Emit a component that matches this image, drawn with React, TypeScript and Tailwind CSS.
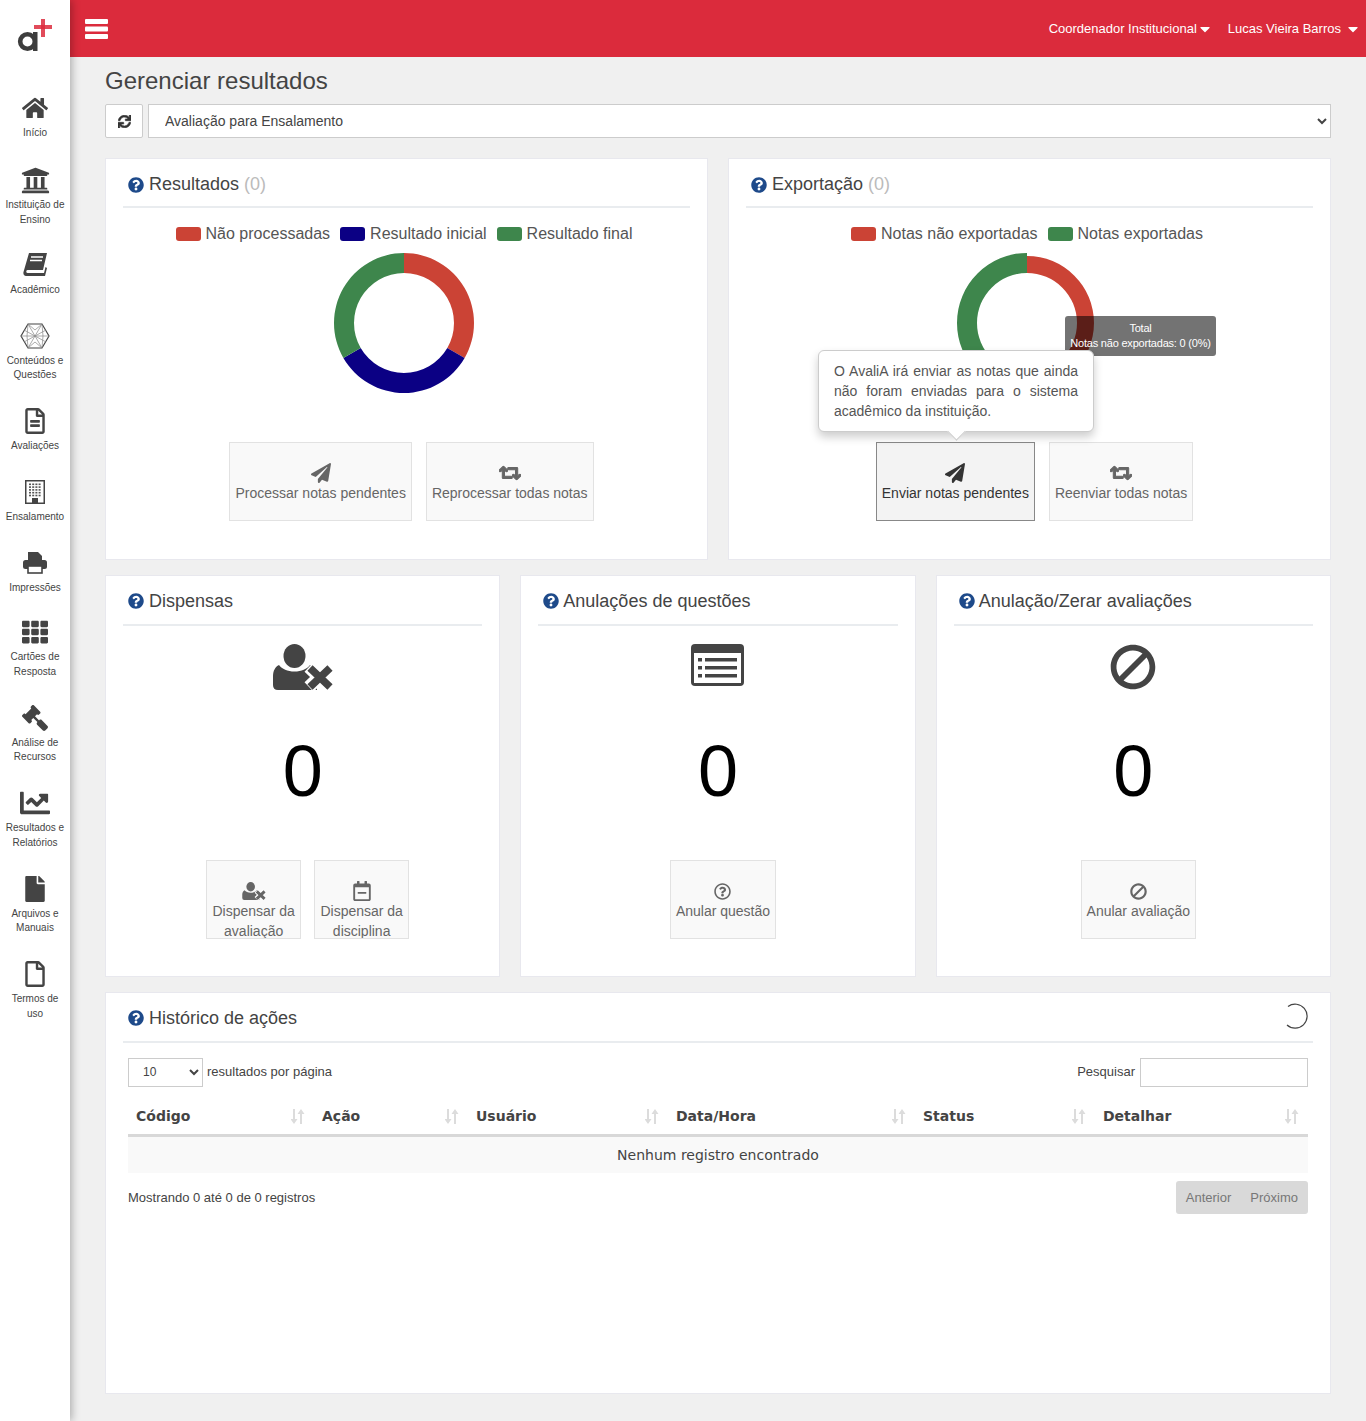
import type { ReactNode } from "react";
import {
  FaBan,
  FaCaretDown,
  FaChartLine,
  FaFile,
  FaGavel,
  FaHome,
  FaPaperPlane,
  FaQuestionCircle,
  FaRegCalendarMinus,
  FaRegFile,
  FaRegFileAlt,
  FaRegQuestionCircle,
  FaRetweet,
  FaSync,
  FaTh,
  FaUniversity,
} from "react-icons/fa";

function BookIcon() {
  return (
    <svg width="25" height="23" viewBox="0 0 25 23">
      <path d="M6 0h18l-4 17H4.500c-1.500 0-1.800 3 0 3H21l1.500-6 1.500 1-2 8H3c-2 0-3-2-2.500-4z" fill="#444" />
      <path d="M8 4h12M7 7.500h12" stroke="#fff" strokeWidth="1.300" />
    </svg>
  );
}

function MeshIcon() {
  return (
    <svg width="30" height="26" viewBox="0 0 30 26" fill="none" stroke="#888" strokeWidth="0.700">
      <path d="M8 1h14l7 12-7 12H8L1 13z" stroke="#444" strokeWidth="1.200" />
      <path d="M8 1l14 24M22 1L8 25M1 13h28M8 1l-1 12 1 12M22 1l1 12-1 12M4 7l22 12M26 7L4 19M8 1l7 6 7-6M8 25l7-6 7 6" />
    </svg>
  );
}

function BuildingIcon() {
  const dots = [0, 1, 2, 3, 4].flatMap((row) => [0, 1, 2, 3].map((col) => [col, row]));
  return (
    <svg width="20" height="24" viewBox="0 0 20 24">
      <rect x="0.750" y="0.750" width="18.500" height="22.500" fill="none" stroke="#444" strokeWidth="1.500" />
      {dots.map(([col, row]) => (
        <rect key={`${col}-${row}`} x={4 + col * 3.200} y={3.500 + row * 2.800} width="2" height="1.600" fill="#555" />
      ))}
      <rect x="7" y="18" width="6" height="5" fill="#444" />
    </svg>
  );
}

function PrinterIcon() {
  return (
    <svg width="24" height="22" viewBox="0 0 24 22" fill="#444">
      <path d="M5 0h10l4 4v5H5z" />
      <rect x="0" y="8" width="24" height="9" rx="2.500" />
      <rect x="5" y="14" width="14" height="7" fill="#fff" stroke="#444" strokeWidth="1.600" />
    </svg>
  );
}

function ListAltIcon() {
  return (
    <svg width="53" height="42" viewBox="0 0 53 42">
      <rect width="53" height="42" rx="4" fill="#444" />
      <rect x="3" y="9" width="47" height="30" fill="#fff" />
      <path d="M7 14h4v3.500H7zM7 22h4v3.500H7zM7 30h4v3.500H7zM14 14h32v3.500H14zM14 22h32v3.500H14zM14 30h32v3.500H14z" fill="#444" />
    </svg>
  );
}

function UserTimesIcon({ width, height }: { width: number; height: number }) {
  return (
    <svg width={width} height={height} viewBox="0 0 60 46" fill="currentColor">
      <ellipse cx="21.500" cy="12" rx="11" ry="12" />
      <path d="M6 21c3 4 8.500 6.500 15.500 6.500S34 25 37 21c4 2 7 6 7 12v13H5q-5 0-5-5v-9c0-5 2-9 6-11z" />
      <path d="M36 23l21 20M57 23L36 43" stroke="#fff" strokeWidth="13" />
      <path d="M37 24l20 19M57 24L37 43" stroke="currentColor" strokeWidth="7.500" />
    </svg>
  );
}

function SortIcon() {
  return (
    <svg width="14" height="15" viewBox="0 0 14 15" fill="#dcdcdc" className="mr-[1px] shrink-0">
      <path d="M2 0h2v10h2.500L3 15l-3.500-5H2zM10 0l3.500 5H11v10H9V5H6.500z" />
    </svg>
  );
}

const navItems: { icon: ReactNode; label: string[]; tweak?: string }[] = [
  { icon: <FaHome size={26} />, label: ["Início"] },
  { icon: <FaUniversity size={29} />, label: ["Instituição de", "Ensino"], tweak: "mt-[1px]" },
  { icon: <BookIcon />, label: ["Acadêmico"], tweak: "-mt-[1px]" },
  { icon: <MeshIcon />, label: ["Conteúdos e", "Questões"] },
  { icon: <FaRegFileAlt size={26} />, label: ["Avaliações"] },
  { icon: <BuildingIcon />, label: ["Ensalamento"] },
  { icon: <PrinterIcon />, label: ["Impressões"] },
  { icon: <FaTh size={26} />, label: ["Cartões de", "Resposta"], tweak: "-mt-[2px]" },
  { icon: <FaGavel size={26} className="-scale-x-100" />, label: ["Análise de", "Recursos"] },
  { icon: <FaChartLine size={30} />, label: ["Resultados e", "Relatórios"] },
  { icon: <FaFile size={26} />, label: ["Arquivos e", "Manuais"] },
  { icon: <FaRegFile size={26} />, label: ["Termos de", "uso"] },
];

function Sidebar() {
  return (
    <aside className="relative z-20 flex w-[70px] shrink-0 flex-col items-center bg-white shadow-[2px_0_8px_rgba(0,0,0,0.28)]">
      <div className="h-[93px] w-full">
        <svg width="70" height="60" viewBox="0 0 70 60">
          <circle cx="27.500" cy="41.500" r="7.300" fill="none" stroke="#3d3d3d" strokeWidth="4.600" />
          <rect x="33" y="32" width="4.500" height="19" fill="#3d3d3d" />
          <rect x="34" y="25" width="18" height="4" fill="#dc2c3d" opacity="0.85" />
          <rect x="41" y="19" width="4" height="18" fill="#dc2c3d" opacity="0.85" />
        </svg>
      </div>
      <nav className="flex w-full flex-col gap-[23.5px]">
        {navItems.map((item) => (
          <a key={item.label[0]} className={`flex flex-col items-center text-[#444] ${item.tweak ?? ""}`}>
            <span className="flex h-[30px] items-center justify-center">{item.icon}</span>
            <span className="mt-[3px] text-center text-[10px] leading-[14.5px] whitespace-nowrap">
              {item.label.map((line) => (
                <span key={line} className="block">
                  {line}
                </span>
              ))}
            </span>
          </a>
        ))}
      </nav>
    </aside>
  );
}

function Topbar() {
  return (
    <header className="flex h-[57px] items-center justify-between bg-[#db2b3c] pr-[5.5px] pl-[15px] text-[13px] text-white">
      <svg width="23" height="20" viewBox="0 0 23 20" fill="#fff">
        <rect y="0" width="23" height="5" rx="1" />
        <rect y="7.500" width="23" height="5" rx="1" />
        <rect y="15" width="23" height="5" rx="1" />
      </svg>
      <div className="flex items-center">
        <span>Coordenador Institucional</span>
        <FaCaretDown size={16} className="ml-[0.5px]" />
        <span className="ml-[14.5px]">Lucas Vieira Barros</span>
        <FaCaretDown size={16} className="ml-[3.5px]" />
      </div>
    </header>
  );
}

function CardTitle({
  children,
  right,
  tall,
  tight,
}: {
  children: ReactNode;
  right?: ReactNode;
  tall?: boolean;
  tight?: boolean;
}) {
  return (
    <div
      className={`flex items-center justify-between border-b-2 border-[#e9ecef] pl-[5px] text-[18px] text-[#444] ${
        tall ? "h-[50px]" : "h-[49px]"
      }`}
    >
      <div className={`flex items-center ${tall ? "mt-[2px]" : "mt-[4px]"} ${tight ? "gap-[4px]" : "gap-[5px]"}`}>
        <FaQuestionCircle size={16} className="text-[#1e4a8a]" />
        <span>{children}</span>
      </div>
      {right}
    </div>
  );
}

function Card({ children }: { children: ReactNode }) {
  return <section className="relative h-[402px] border border-[#e8e8ee] bg-white px-[17px]">{children}</section>;
}

function ActionButton({
  icon,
  children,
  active,
  narrow,
}: {
  icon: ReactNode;
  children: ReactNode;
  active?: boolean;
  narrow?: boolean;
}) {
  return (
    <button
      className={`block h-[79px] border text-[14px] leading-[20px] ${narrow ? "w-[95px]" : "whitespace-nowrap"} ${
        active ? "border-[#888] bg-[#f3f3f3] text-[#333]" : "border-[#e2e2e2] bg-[#f9f9f9] text-[#666]"
      }`}
    >
      <div className="flex h-[77px] flex-col items-center overflow-hidden px-[5px] pt-[20px]">
        <span className="flex h-[20px] shrink-0 items-center">{icon}</span>
        <span>{children}</span>
      </div>
    </button>
  );
}

function Legend({ items }: { items: { color: string; label: string }[] }) {
  return (
    <div className="mr-[5px] flex h-[20px] items-center justify-center gap-[10px] text-[16px] text-[#555]">
      {items.map((item) => (
        <div key={item.label} className="flex items-center gap-[5px]">
          <span className="h-[14px] w-[25px] rounded-[3px]" style={{ backgroundColor: item.color }} />
          <span>{item.label}</span>
        </div>
      ))}
    </div>
  );
}

function polar(r: number, deg: number) {
  const a = ((deg - 90) * Math.PI) / 180;
  return `${(75 + r * Math.cos(a)).toFixed(2)} ${(75 + r * Math.sin(a)).toFixed(2)}`;
}

function arc(from: number, to: number, outer: number, inner: number) {
  return `M${polar(outer, from)} A${outer} ${outer} 0 0 1 ${polar(outer, to)} L${polar(inner, to)} A${inner} ${inner} 0 0 0 ${polar(inner, from)} Z`;
}

function Donut({ slices }: { slices: { from: number; to: number; outer: number; color: string }[] }) {
  return (
    <svg width="150" height="150" viewBox="0 0 150 150" className="mx-auto">
      {slices.map((s) => (
        <path key={s.color} d={arc(s.from, s.to, s.outer, 50)} fill={s.color} />
      ))}
    </svg>
  );
}

const RED = "#cb4335";
const BLUE = "#0b0084";
const GREEN = "#3e864c";

function ResultadosCard() {
  return (
    <Card>
      <CardTitle>
        Resultados <span className="text-[#bbb]">(0)</span>
      </CardTitle>
      <div className="mt-[16px]">
        <Legend
          items={[
            { color: RED, label: "Não processadas" },
            { color: BLUE, label: "Resultado inicial" },
            { color: GREEN, label: "Resultado final" },
          ]}
        />
      </div>
      <div className="mt-[4px] mr-[5px]">
        <Donut
          slices={[
            { from: 0, to: 120, outer: 70, color: RED },
            { from: 120, to: 240, outer: 70, color: BLUE },
            { from: 240, to: 360, outer: 70, color: GREEN },
          ]}
        />
      </div>
      <div className="mt-[44px] flex justify-center gap-[14px] pl-[10px]">
        <ActionButton icon={<FaPaperPlane size={20} />}>Processar notas pendentes</ActionButton>
        <ActionButton icon={<FaRetweet size={22} className="stroke-current stroke-[30px]" />}>
          Reprocessar todas notas
        </ActionButton>
      </div>
    </Card>
  );
}

function ExportacaoCard() {
  return (
    <Card>
      <CardTitle>
        Exportação <span className="text-[#bbb]">(0)</span>
      </CardTitle>
      <div className="mt-[16px]">
        <Legend
          items={[
            { color: RED, label: "Notas não exportadas" },
            { color: GREEN, label: "Notas exportadas" },
          ]}
        />
      </div>
      <div className="mt-[4px] mr-[5px]">
        <Donut
          slices={[
            { from: 0, to: 180, outer: 67, color: RED },
            { from: 180, to: 360, outer: 70, color: GREEN },
          ]}
        />
      </div>
      <div className="mt-[44px] flex justify-center gap-[14px] pl-[10px]">
        <ActionButton active icon={<FaPaperPlane size={20} />}>
          Enviar notas pendentes
        </ActionButton>
        <ActionButton icon={<FaRetweet size={22} className="stroke-current stroke-[30px]" />}>
          Reenviar todas notas
        </ActionButton>
      </div>

      <div className="absolute top-[157px] left-[336px] w-[151px] rounded-[3px] bg-black/55 py-[5px] text-center text-[11px] leading-[15px] tracking-[-0.2px] text-white">
        <div>Total</div>
        <div>Notas não exportadas: 0 (0%)</div>
      </div>

      <div className="absolute top-[191px] left-[89px] w-[276px] rounded-[6px] border border-[#ccc] bg-white px-[15px] py-[10px] text-justify text-[14px] leading-[20px] text-[#555] shadow-[0_5px_10px_rgba(0,0,0,0.2)]">
        O AvaliA irá enviar as notas que ainda não foram enviadas para o sistema acadêmico da instituição.
        <span className="absolute -bottom-[7px] left-[131px] h-[13px] w-[13px] rotate-45 border-r border-b border-[#ccc] bg-white" />
      </div>
    </Card>
  );
}

function StatCard({
  title,
  icon,
  tight,
  children,
}: {
  title: string;
  icon: ReactNode;
  tight?: boolean;
  children: ReactNode;
}) {
  return (
    <Card>
      <CardTitle tall tight={tight}>
        {title}
      </CardTitle>
      <div className="mt-[18px] flex h-[46px] items-start justify-center text-[#444]">{icon}</div>
      <div className="mt-[40px] text-center text-[72px] leading-[83px] text-black">0</div>
      <div className="mt-[47px] flex justify-center gap-[13px] pl-[10px]">{children}</div>
    </Card>
  );
}

const columns = [
  { label: "Código", width: "w-[186px]" },
  { label: "Ação", width: "w-[154px]" },
  { label: "Usuário", width: "w-[200px]" },
  { label: "Data/Hora", width: "w-[247px]" },
  { label: "Status", width: "w-[180px]" },
  { label: "Detalhar", width: "w-[213px]" },
];

function HistoricoCard() {
  return (
    <Card>
      <CardTitle
        tall
        right={
          <svg width="26" height="26" viewBox="0 0 26 26" fill="none" className="mr-[5px] mb-[2px]">
            <path d="M6 3.500A12 12 0 1 1 5 22" stroke="#444" strokeWidth="1.200" />
          </svg>
        }
      >
        Histórico de ações
      </CardTitle>
      <div className="px-[5px]">
        <div className="mt-[14px] flex h-[30px] items-center justify-between text-[13px] text-[#444]">
          <div className="flex items-center gap-[4px]">
            <select className="h-[29px] w-[75px] border border-[#ccc] bg-white pl-[10px] text-[12px] text-[#444]">
              <option>10</option>
            </select>
            <span>resultados por página</span>
          </div>
          <div className="flex items-center gap-[5px]">
            <span>Pesquisar</span>
            <input className="h-[29px] w-[168px] border border-[#ccc] bg-white" />
          </div>
        </div>

        <table className="mt-[13px] w-full table-fixed font-['DejaVu_Sans',sans-serif] text-[14px] text-[#444]">
          <thead>
            <tr className="h-[35px] border-b-[3px] border-[#d8d8d8]">
              {columns.map((col) => (
                <th key={col.label} className={`${col.width} px-[8px] text-left font-bold`}>
                  <div className="flex items-center justify-between">
                    <span>{col.label}</span>
                    <SortIcon />
                  </div>
                </th>
              ))}
            </tr>
          </thead>
          <tbody>
            <tr className="h-[38px] bg-[#f9f9f9]">
              <td colSpan={6} className="pt-[1px] text-center">
                Nenhum registro encontrado
              </td>
            </tr>
          </tbody>
        </table>

        <div className="mt-[8px] flex items-center justify-between text-[13px] text-[#444]">
          <span>Mostrando 0 até 0 de 0 registros</span>
          <div className="flex h-[33px] items-center gap-[19px] rounded-[3px] bg-[#d9d9d9] px-[10px] text-[#777]">
            <span>Anterior</span>
            <span>Próximo</span>
          </div>
        </div>
      </div>
    </Card>
  );
}

export default function App() {
  return (
    <div className="flex min-h-[1421px] bg-[#f0f0f0] font-['Liberation_Sans',Arial,sans-serif]">
      <Sidebar />
      <div className="min-w-0 flex-1">
        <Topbar />
        <main className="px-[35px]">
          <h1 className="mt-[9px] text-[24px] leading-[29px] text-[#444]">Gerenciar resultados</h1>
          <div className="mt-[9px] flex gap-[5px]">
            <button className="flex h-[34px] w-[38px] items-center justify-center rounded-[2px] border border-[#ccc] bg-white text-[#333]">
              <FaSync size={13} className="stroke-current stroke-[25px]" />
            </button>
            <select className="h-[34px] flex-1 border border-[#ccc] bg-white pl-[12px] text-[14px] text-[#444]">
              <option>Avaliação para Ensalamento</option>
            </select>
          </div>

          <div className="mt-[20px] grid grid-cols-2 gap-[20px]">
            <ResultadosCard />
            <ExportacaoCard />
          </div>

          <div className="mt-[15px] grid grid-cols-3 gap-[20px]">
            <StatCard title="Dispensas" icon={<UserTimesIcon width={60} height={46} />}>
              <ActionButton narrow icon={<UserTimesIcon width={24} height={18} />}>
                Dispensar da avaliação
              </ActionButton>
              <ActionButton narrow icon={<FaRegCalendarMinus size={20} />}>
                Dispensar da disciplina
              </ActionButton>
            </StatCard>
            <StatCard tight title="Anulações de questões" icon={<ListAltIcon />}>
              <ActionButton icon={<FaRegQuestionCircle size={17} />}>Anular questão</ActionButton>
            </StatCard>
            <StatCard tight title="Anulação/Zerar avaliações" icon={<FaBan size={46} className="-scale-x-100" />}>
              <ActionButton icon={<FaBan size={17} className="-scale-x-100" />}>Anular avaliação</ActionButton>
            </StatCard>
          </div>

          <div className="mt-[15px]">
            <HistoricoCard />
          </div>
        </main>
      </div>
    </div>
  );
}
